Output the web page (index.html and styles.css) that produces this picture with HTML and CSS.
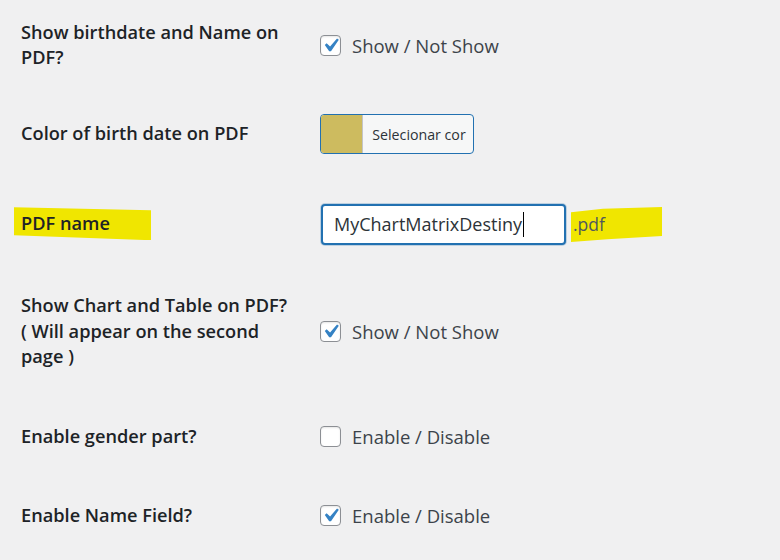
FILE: index.html
```html
<!DOCTYPE html>
<html lang="en">
<head>
<meta charset="utf-8">
<title>PDF settings</title>
<link rel="stylesheet" href="styles.css">
</head>
<body>
<div class="form-table">
  <div class="row row-1">
    <div class="label">Show birthdate and Name on PDF?</div>
    <div class="field">
      <label class="check"><span class="box checked"><svg viewBox="0 0 20 20"><path d="M14.83 4.89l1.34.94-5.81 8.38H9.02L5.78 9.67l1.34-1.25 2.57 2.4z" fill="#3582c4"/></svg></span><span class="check-text">Show / Not Show</span></label>
    </div>
  </div>
  <div class="row row-2">
    <div class="label">Color of birth date on PDF</div>
    <div class="field">
      <button class="color-btn" type="button"><span class="swatch"></span><span class="color-text">Selecionar cor</span></button>
    </div>
  </div>
  <div class="row row-3">
    <div class="label"><span class="hl hl-label">PDF name</span></div>
    <div class="field name-field">
      <div class="text-input"><span class="value">MyChartMatrixDestiny</span><span class="caret"></span></div>
      <span class="hl hl-ext">.pdf</span>
    </div>
  </div>
  <div class="row row-4">
    <div class="label">Show Chart and Table on PDF?<br>( Will appear on the second page )</div>
    <div class="field">
      <label class="check"><span class="box checked"><svg viewBox="0 0 20 20"><path d="M14.83 4.89l1.34.94-5.81 8.38H9.02L5.78 9.67l1.34-1.25 2.57 2.4z" fill="#3582c4"/></svg></span><span class="check-text">Show / Not Show</span></label>
    </div>
  </div>
  <div class="row row-5">
    <div class="label">Enable gender part?</div>
    <div class="field">
      <label class="check"><span class="box"></span><span class="check-text">Enable / Disable</span></label>
    </div>
  </div>
  <div class="row row-6">
    <div class="label">Enable Name Field?</div>
    <div class="field">
      <label class="check"><span class="box checked"><svg viewBox="0 0 20 20"><path d="M14.83 4.89l1.34.94-5.81 8.38H9.02L5.78 9.67l1.34-1.25 2.57 2.4z" fill="#3582c4"/></svg></span><span class="check-text">Enable / Disable</span></label>
    </div>
  </div>
</div>
</body>
</html>
```

FILE: styles.css
```css
html, body {
  margin: 0;
  padding: 0;
  background: #f0f0f1;
}
body {
  font-family: "Open Sans", "Noto Sans", "Liberation Sans", sans-serif;
  color: #3c434a;
  overflow: hidden;
}
.form-table {
  padding-left: 21px;
  width: 759px;
}
.row {
  display: grid;
  grid-template-columns: 299px 1fr;
  align-items: center;
}
.row-1 { height: 90px; }
.row-2 { height: 88px; }
.row-3 { height: 92px; }
.row-4 { height: 123px; }
.row-5 { height: 87px; }
.row-6 { height: 71px; }

.label {
  font-size: 18.2px;
  font-weight: 600;
  line-height: 25.5px;
  color: #1d2327;
  width: 272px;
}
.field {
  display: flex;
  align-items: center;
}
.check {
  display: flex;
  align-items: center;
  gap: 11px;
}
.box {
  box-sizing: border-box;
  width: 21px;
  height: 21px;
  border: 1px solid #8c8f94;
  border-radius: 4px;
  background: #fff;
  display: flex;
  align-items: center;
  justify-content: center;
  overflow: visible;
  box-shadow: inset 0 1px 2px rgba(0,0,0,0.1);
}
.box svg {
  display: block;
  width: 27px;
  height: 27px;
  margin: -3px;
  flex: none;
}
.check-text {
  font-size: 18.5px;
  color: #3c434a;
}

.color-btn {
  display: flex;
  align-items: stretch;
  padding: 0;
  margin: 0;
  height: 40px;
  width: 154px;
  border: 1px solid #2271b1;
  border-radius: 4px;
  background: #f6f7f7;
  overflow: hidden;
  font-family: inherit;
}
.swatch {
  width: 41px;
  background: #cdbb5f;
  border-right: 1px solid #c3c4c7;
}
.color-text {
  flex: 1;
  display: flex;
  align-items: center;
  justify-content: center;
  font-size: 14.2px;
  color: #2c3338;
  padding-left: 2px;
}

.name-field {
  gap: 5px;
}
.text-input {
  box-sizing: border-box;
  width: 245px;
  height: 41px;
  margin-left: 1px;
  border: 2px solid #2271b1;
  border-radius: 4px;
  background: #fff;
  display: flex;
  align-items: center;
  padding-left: 11px;
  box-shadow: 0 0 0 1px rgba(34,113,177,0.25);
}
.value {
  font-size: 18px;
  color: #2c3338;
}
.caret {
  width: 1px;
  height: 25px;
  background: #000;
  margin-left: 1px;
}

.hl {
  position: relative;
  z-index: 0;
}
.hl::before {
  content: "";
  position: absolute;
  z-index: -1;
  background: #f0e600;
}
.hl-label::before {
  left: -7px;
  top: -4px;
  width: 137px;
  height: 33px;
  clip-path: polygon(0 0, 100% 9%, 100% 100%, 0 85%);
}
.hl-ext {
  font-size: 17.5px;
  color: #50575e;
  padding-left: 2px;
}
.hl-ext::before {
  left: 0;
  top: -5px;
  width: 91px;
  height: 35px;
  clip-path: polygon(0 15%, 35% 5%, 100% 0, 100% 83%, 40% 92%, 0 100%);
}
```
